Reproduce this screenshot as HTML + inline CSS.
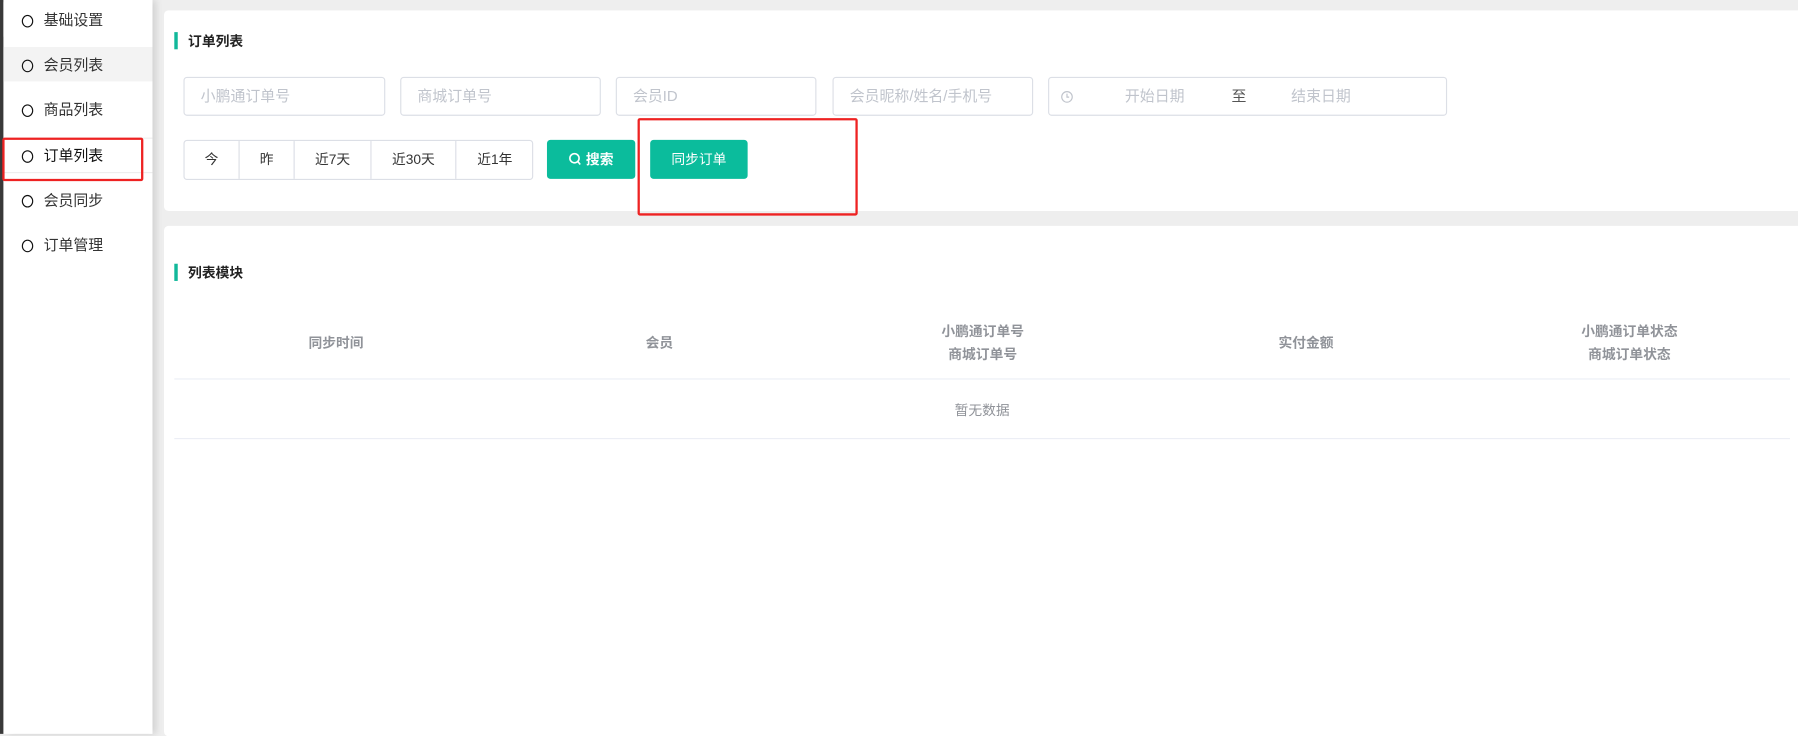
<!DOCTYPE html>
<html><head><meta charset="utf-8"><style>
*{margin:0;padding:0;box-sizing:border-box}
html,body{width:1798px;height:731px;overflow:hidden;background:#eeeeee;font-family:"Liberation Sans","Noto Sans CJK SC",sans-serif}
#w{position:absolute;left:0;top:0;width:1568px;height:640px;transform:scale(1.14668);transform-origin:0 0;background:#eeeeee}
.a{position:absolute}
.side{left:3px;top:0;width:130px;height:640px;background:#fff;box-shadow:3px 0 6px rgba(0,0,0,.12)}
.dark{left:0;top:0;width:3px;height:640px;background:#3a3a3a}
.it{position:absolute;left:0;width:130px;height:30px;line-height:32px;font-size:13px;color:#333;padding-left:35px}
.it i{position:absolute;left:16px;top:11px;width:10px;height:11px;border:1.8px solid #111;border-radius:50%}
.card{background:#fff;border-radius:4px}
.tt{font-size:12px;font-weight:bold;color:#222}
.bar{width:3px;height:15px;background:#11b89a}
.inp{height:34px;border:1px solid #dcdfe6;border-radius:3px;font-size:13px;color:#c0c4cc;line-height:32px;padding-left:14px;background:#fff}
.seg{position:absolute;top:0;height:34px;line-height:32px;text-align:center;font-size:12px;color:#333;border-right:1px solid #dcdfe6}
.btn{height:34px;background:#0bbc9c;color:#fff;border-radius:3px;font-size:12px;font-weight:bold;text-align:center;line-height:34px}
.th{position:absolute;width:282px;text-align:center;font-size:12px;font-weight:bold;color:#909399;line-height:20px}
.red{border:2px solid #ee2222;border-radius:2px}
</style></head><body><div id="w">
<div class="a dark"></div>
<div class="a side">
 <div class="it" style="top:2px;background:#fff"><i></i>基础设置</div>
 <div class="it" style="top:41px;background:#f3f3f3"><i></i>会员列表</div>
 <div class="it" style="top:80px"><i></i>商品列表</div>
 <div class="a" style="left:0;top:120px;width:130px;height:1px;background:#eee"></div>
 <div class="it" style="top:120px;color:#111"><i></i>订单列表</div>
 <div class="a" style="left:0;top:150px;width:130px;height:1px;background:#eee"></div>
 <div class="it" style="top:159px"><i></i>会员同步</div>
 <div class="it" style="top:198px"><i></i>订单管理</div>
</div>
<div class="a red" style="left:2px;top:120px;width:123px;height:38px"></div>

<div class="a card" style="left:143px;top:9px;width:1430px;height:175px"></div>
<div class="a bar" style="left:152px;top:28px"></div>
<div class="a tt" style="left:164px;top:28px;line-height:16px">订单列表</div>
<div class="a inp" style="left:160px;top:67px;width:176px">小鹏通订单号</div>
<div class="a inp" style="left:349px;top:67px;width:175px">商城订单号</div>
<div class="a inp" style="left:537px;top:67px;width:175px">会员ID</div>
<div class="a inp" style="left:726px;top:67px;width:175px">会员昵称/姓名/手机号</div>
<div class="a inp" style="left:914px;top:67px;width:348px;padding:0">
 <svg class="a" style="left:10px;top:11px" width="11" height="11" viewBox="0 0 11 11"><circle cx="5.5" cy="5.5" r="4.6" fill="none" stroke="#c0c4cc" stroke-width="1"/><path d="M5.5 2.6V5.7H7.4" fill="none" stroke="#c0c4cc" stroke-width="1"/></svg>
 <span class="a" style="left:66px">开始日期</span>
 <span class="a" style="left:159px;color:#555">至</span>
 <span class="a" style="left:211px">结束日期</span>
</div>
<div class="a" style="left:160px;top:122px;width:305px;height:35px;border:1px solid #dcdfe6;border-radius:3px;overflow:hidden">
 <div class="seg" style="left:0;width:48px">今</div>
 <div class="seg" style="left:48px;width:48px">昨</div>
 <div class="seg" style="left:96px;width:67px">近7天</div>
 <div class="seg" style="left:163px;width:74px">近30天</div>
 <div class="seg" style="left:237px;width:67px;border:0">近1年</div>
</div>
<div class="a btn" style="left:477px;top:122px;width:77px"><svg style="vertical-align:-2px;margin-right:4px" width="11" height="12" viewBox="0 0 11 12"><circle cx="5" cy="5" r="4" fill="none" stroke="#fff" stroke-width="1.4"/><path d="M8 8l2 2.5" stroke="#fff" stroke-width="1.4"/></svg>搜索</div>
<div class="a btn" style="left:567px;top:122px;width:85px;font-weight:normal">同步订单</div>
<div class="a red" style="left:556px;top:103px;width:192px;height:85px"></div>

<div class="a card" style="left:143px;top:197px;width:1430px;height:445px"></div>
<div class="a bar" style="left:152px;top:230px"></div>
<div class="a tt" style="left:164px;top:230px;line-height:16px">列表模块</div>
<div class="th" style="left:152px;top:289px">同步时间</div>
<div class="th" style="left:434px;top:289px">会员</div>
<div class="th" style="left:716px;top:279px">小鹏通订单号<br>商城订单号</div>
<div class="th" style="left:998px;top:289px">实付金额</div>
<div class="th" style="left:1280px;top:279px">小鹏通订单状态<br>商城订单状态</div>
<div class="a" style="left:152px;top:330px;width:1409px;height:1px;background:#ebeef5"></div>
<div class="a" style="left:152px;top:349px;width:1409px;text-align:center;font-size:12px;color:#909399;line-height:18px">暂无数据</div>
<div class="a" style="left:152px;top:382px;width:1409px;height:1px;background:#ebeef5"></div>
</div></body></html>
